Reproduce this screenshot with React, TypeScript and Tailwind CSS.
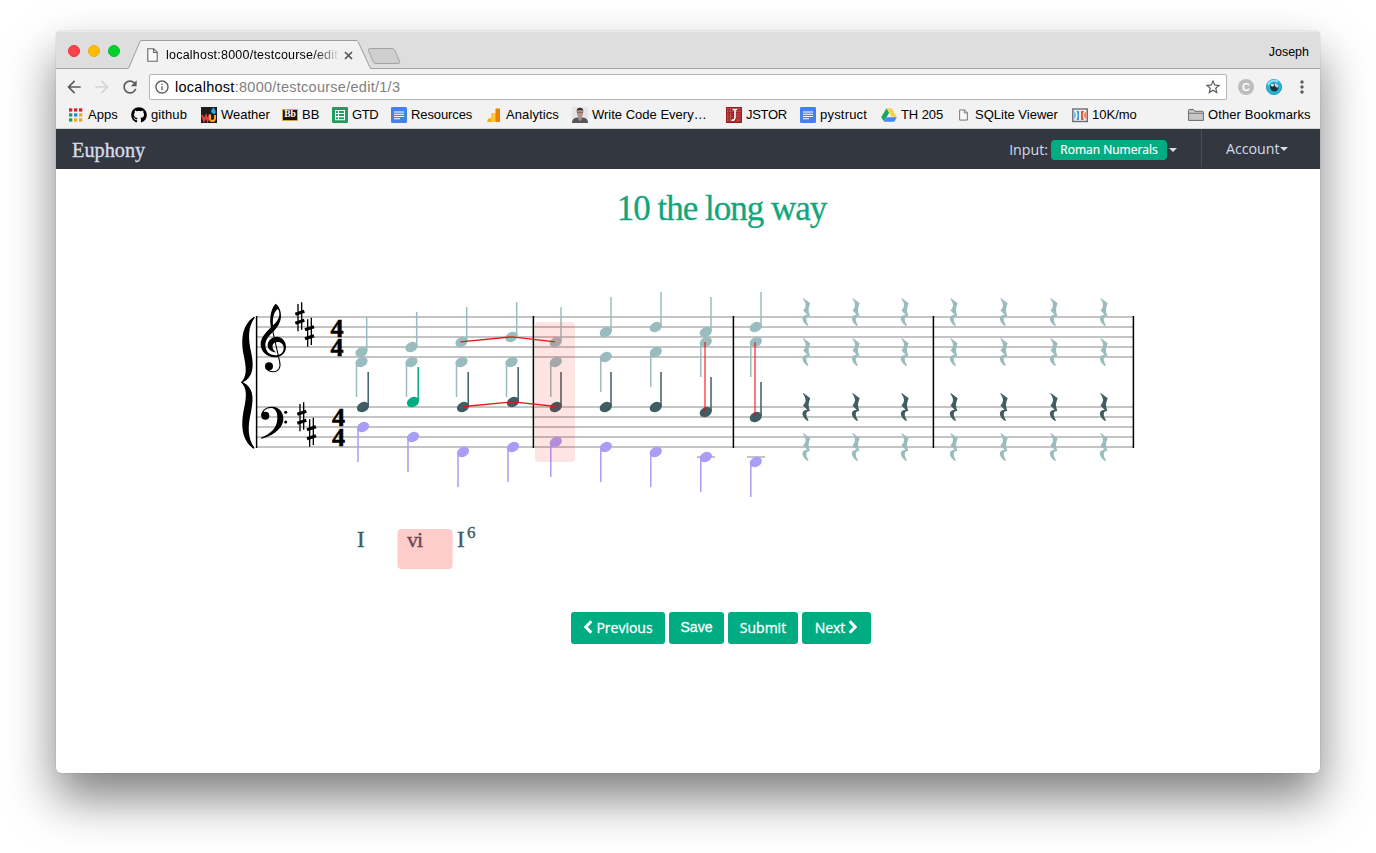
import React from "react";
import { FaGithub } from "react-icons/fa";
import { MdArrowBack, MdArrowForward, MdRefresh, MdMoreVert, MdStarBorder, MdInfoOutline } from "react-icons/md";

type Point = [number, number];

const SOPRANO: Point[] = [[361.5, 352], [411.5, 347], [461.5, 342], [511.5, 337], [555.8, 342], [605.8, 332], [655.8, 327], [705.8, 332], [755.8, 327]];
const ALTO: Point[] = [[361.5, 362], [411.5, 362], [461.5, 362], [511.5, 362], [555.8, 362], [605.8, 357], [655.8, 352], [705.8, 342], [755.8, 342]];
const TENOR: Point[] = [[363, 407], [413, 402], [463, 407], [513, 402], [555.8, 407], [605.8, 407], [655.8, 407], [705.8, 412], [755.8, 417]];
const BASS: Point[] = [[363, 427], [413, 437], [463, 452], [513, 447], [555.8, 442], [605.8, 447], [655.8, 452], [705.8, 457], [755.8, 462]];
const RESTS = [802.3, 851.7, 900.7, 949.7, 999.7, 1049.7, 1099.7];

function Note({ at, up, color }: { at: Point; up?: boolean; color: string }) {
  const [x, y] = at;
  const sx = up ? x + 5.2 : x - 5;
  return (
    <g fill={color} stroke={color}>
      <ellipse cx={x} cy={y} rx="6.4" ry="4.8" stroke="none" transform={`rotate(-27 ${x} ${y})`} />
      <line x1={sx} x2={sx} y1={up ? y - 1 : y + 1} y2={up ? y - 35 : y + 35} strokeWidth="1.5" />
    </g>
  );
}

function Rest({ x, y, color }: { x: number; y: number; color: string }) {
  return (
    <path
      transform={`translate(${x} ${y}) scale(.3333)`}
      fill={color}
      d="M3 0L24 16C18 30 17 40 23 54C10 53 9 66 19 82L16 84C5 77 -3 64 2 56C5 51 11 50 15 51L2 37C13 27 12 16 2 2Z"
    />
  );
}

function Sharp({ x, y }: { x: number; y: number }) {
  return (
    <g transform={`translate(${x} ${y})`} stroke="#000">
      <path d="M8 5V87M19 0V82" strokeWidth="4" />
      <path d="M0 36L27 27M0 63L27 54" strokeWidth="9.5" />
    </g>
  );
}

function Score() {
  return (
    <svg className="block" width="912" height="300" viewBox="232 285 912 300">
      {[317, 327, 337, 347, 357, 407, 417, 427, 437, 447].map((y) => (
        <line key={y} x1="256" x2="1134" y1={y} y2={y} stroke="#b0b0b0" strokeWidth="1.6" />
      ))}
      {[256.6, 533.4, 733.4, 933.4, 1133.4].map((x) => (
        <line key={x} x1={x} x2={x} y1="316" y2="448" stroke="#000" strokeWidth="1.5" />
      ))}
      <g transform="translate(230 285) scale(.33333)">
        <path d="M72 95C34 122 33 165 41 210C49 249 52 273 33 292C52 311 50 335 41 376C33 420 34 464 70 491L74 489C52 458 53 425 63 380C73 334 68 307 39 292C68 277 73 249 64 205C54 160 53 127 75 97Z" />
        <path
          fillRule="evenodd"
          d="M137 56C147 63 153 76 153 92C153 113 140 130 128 142C114 155 106 167 106 181C107 201 119 211 136 211C151 211 161 203 161 189C161 178 153 171 143 171C130 171 125 181 129 191C131 197 135 200 139 202C125 202 113 194 113 181C113 166 126 155 141 155C157 156 168 169 168 186C168 205 153 217 133 217C110 216 92 200 92 178C92 158 107 143 123 127C121 118 120 108 121 98C122 80 128 65 137 56ZM143 72C134 78 127 94 129 121C139 112 148 101 148 87C148 79 146 74 143 72Z"
        />
        <path d="M125 124L149 230C153 248 145 260 130 260C121 260 112 256 108 249" fill="none" stroke="#000" strokeWidth="3.2" />
        <circle cx="117" cy="244" r="12" />
        <path d="M94 396C91 377 107 364 127 365C147 366 160 381 160 401C160 430 128 453 94 461L93 458C121 447 141 430 142 402C143 383 137 370 124 369C110 368 100 377 98 388Z" />
        <circle cx="106" cy="392" r="12" />
        <circle cx="167" cy="382" r="4.5" />
        <circle cx="167" cy="411" r="4.5" />
        <Sharp x={196} y={52} />
        <Sharp x={225} y={98} />
        <Sharp x={202} y={352} />
        <Sharp x={231} y={398} />
      </g>
      <g className="font-['Liberation_Serif',serif] font-bold" fontSize="26" stroke="#000" strokeWidth=".6">
        <text x="330.6" y="336.8">4</text>
        <text x="330.6" y="356.4">4</text>
        <text x="332" y="426.4">4</text>
        <text x="332" y="446.4">4</text>
      </g>
      {RESTS.map((x) => (
        <g key={x}>
          <Rest x={x} y={298} color="#9bbcbe" />
          <Rest x={x} y={338} color="#9bbcbe" />
          <Rest x={x} y={393} color="#405e62" />
          <Rest x={x} y={433} color="#9bbcbe" />
        </g>
      ))}
      <path d="M697 457H715M747 457H765" stroke="#b0b0b0" strokeWidth="1.6" />
      {SOPRANO.map((p, i) => <Note key={i} at={p} up color="#9bbcbe" />)}
      {ALTO.map((p, i) => <Note key={i} at={p} color="#9bbcbe" />)}
      {TENOR.map((p, i) => <Note key={i} at={p} up color={i === 1 ? "#00ad83" : "#3f5d62"} />)}
      {BASS.map((p, i) => <Note key={i} at={p} color="#a99ef7" />)}
      <rect x="535" y="322" width="40" height="140" rx="4" fill="#ff0000" fillOpacity=".105" />
      <path d="M460.5 341.8L512 336.8L555 341.8M464 406.5L513 401.8L556 406.5" fill="none" stroke="#e01818" strokeWidth="1.3" />
      <path d="M705 342V412M755 342V416" stroke="#ff0000" strokeOpacity=".52" strokeWidth="2" />
      <g className="font-['Liberation_Serif',serif]" fill="#3f5d62" stroke="#3f5d62" strokeWidth=".4">
        <text x="357" y="547" fontSize="23">I</text>
        <text x="407" y="547" fontSize="22" textLength="16">vi</text>
        <text x="457" y="547" fontSize="23">I</text>
        <text x="467" y="538" fontSize="17">6</text>
      </g>
      <rect x="397.6" y="529" width="55" height="40" rx="4" fill="#ff0000" fillOpacity=".2" />
    </svg>
  );
}

const PageIcon = ({ className }: { className?: string }) => (
  <svg className={className} viewBox="0 0 11 14" fill="#fafafa" stroke="#666" strokeWidth="1.1">
    <path d="M.8.8H6.8L10.2 4.2V13.2H.8ZM6.5.8V4.5H10.2" />
  </svg>
);

const Svg16 = ({ children }: { children: React.ReactNode }) => (
  <svg width="16" height="16" viewBox="0 0 16 16">{children}</svg>
);

const DocIcon = () => (
  <Svg16>
    <rect width="16" height="16" rx="1.2" fill="#4382ee" />
    <path d="M3 5H13M3 7.3H13M3 9.5H13M3 11.7H9" stroke="#fff" strokeWidth="1.1" />
  </Svg16>
);

const DOTS = ["#d8232a", "#d8232a", "#d8232a", "#1f9d58", "#3b7de0", "#f0a81c", "#1f9d58", "#f0a81c", "#f0a81c"];

function AppsIcon() {
  return (
    <Svg16>
      {DOTS.map((c, i) => (
        <rect key={i} x={1 + (i % 3) * 5} y={1.3 + Math.floor(i / 3) * 5} width="3.3" height="3.3" fill={c} />
      ))}
    </Svg16>
  );
}

const WeatherIcon = () => (
  <Svg16>
    <rect width="16" height="16" fill="#1d1d1f" />
    <path d="M1 8L3 13.5L5 9L6.5 13.5L9 7.5" fill="none" stroke="#e8403a" strokeWidth="2" />
    <path d="M9 7.5V11.5Q9 14 11.3 14T14 11.5V8" fill="none" stroke="#f5a623" strokeWidth="2" />
    <path d="M12.5.5Q15.5 4 14.5 6T11 6T12.5.5" fill="#2ba8e0" />
  </Svg16>
);

const BbIcon = () => (
  <span className="flex h-[12px] w-4 items-center justify-center border border-[#d9a441] bg-[#1a1712] font-['Liberation_Serif',serif] text-[9.5px] leading-none font-bold text-white">
    Bb
  </span>
);

const SheetIcon = () => (
  <Svg16>
    <rect width="16" height="16" rx="1.2" fill="#1f9d5c" />
    <path d="M3.5 3.5H12.5V12.7H3.5ZM3.5 6.5H12.5M3.5 9.6H12.5M6.5 3.5V12.7" fill="none" stroke="#fff" strokeWidth="1.1" />
  </Svg16>
);

const AnalyticsIcon = () => (
  <Svg16>
    <path d="M1.5 15Q.8 13 2.5 11.5L6 11V15Z" fill="#f9ab00" />
    <rect x="5" y="6" width="5" height="9" rx=".6" fill="#ffc73a" />
    <rect x="9.5" y="1.5" width="4.5" height="13.5" rx=".8" fill="#ee8100" />
  </Svg16>
);

const PortraitIcon = () => (
  <Svg16>
    <rect width="16" height="16" fill="#e6e4e8" />
    <path d="M0 16Q0 11 5 10.5H11Q16 11 16 16Z" fill="#55575c" />
    <path d="M6 9H10L9.5 13L8 14L6.5 13Z" fill="#a9908a" />
    <ellipse cx="8" cy="5.6" rx="3.2" ry="4.4" fill="#b8958a" />
    <path d="M4.6 5Q4.4.7 8 .8T11.4 5L10.6 3.3H5.4Z" fill="#3b3230" />
    <path d="M5 5.4H11" stroke="#6b5a58" strokeWidth=".8" />
  </Svg16>
);

const JstorIcon = () => (
  <Svg16>
    <rect width="16" height="16" fill="#9d1b1f" />
    <path d="M1 2H15M1 4.5H15M1 7H15M1 9.5H15M1 12H15M1 14H15M2 1V15M4.5 1V15M11.8 1V15M14 1V15" stroke="#d08a88" strokeWidth=".7" strokeDasharray="1.2 1.1" />
    <path d="M6.5 2.5H11M9 2.5V10Q9 13.5 5.5 13.2" fill="none" stroke="#fff" strokeWidth="1.6" />
  </Svg16>
);

const DriveIcon = () => (
  <Svg16>
    <path d="M5.5 1.3L8.2 5.8L3 14.6L.2 10.3Z" fill="#1fa463" />
    <path d="M5.5 1.3H10.6L15.9 10.3H10.8Z" fill="#ffd04b" />
    <path d="M5.5 10.3H15.9L13.3 14.8H2.9Z" fill="#4688f4" />
  </Svg16>
);

const MoneyIcon = () => (
  <Svg16>
    <rect x=".8" y="2" width="14.5" height="12.5" fill="#eee" stroke="#6b6f78" strokeWidth="1.4" />
    <path d="M1.5 4.5Q4 5 4 8.3T1.5 12Z" fill="#7fc4e4" />
    <path d="M4.5 4Q6.5 8.3 4.5 13H7V4Z" fill="#3c9fd4" />
    <path d="M14.7 4.5Q12 5 12 8.3T14.7 12Z" fill="#e98a72" />
    <path d="M12 4Q9.5 8.3 12 13H9V4Z" fill="#e05638" />
  </Svg16>
);

const FolderIcon = () => (
  <Svg16>
    <path d="M.6 13.4V3.2Q.6 2.5 1.3 2.5H5.5L7 4.3H14.4Q15.4 4.3 15.4 5.2V13.4Z" fill="#c8c8c8" stroke="#686868" />
    <path d="M.6 6.3H15.4" stroke="#777" />
  </Svg16>
);

function Bookmark({ icon, label, className }: { icon: React.ReactNode; label: string; className: string }) {
  return (
    <div className={`flex shrink-0 items-center gap-1 ${className}`}>
      <span className="flex w-4 shrink-0 items-center justify-center">{icon}</span>
      <span className="whitespace-nowrap">{label}</span>
    </div>
  );
}

function TabStrip() {
  return (
    <div className="flex h-[38px] shrink-0 items-center bg-[#dedede] shadow-[inset_0_-1px_0_#a5a5a5,inset_0_1px_0_#ececec]">
      <div className="mt-[2px] ml-3 flex gap-2">
        <span className="size-3 rounded-full border border-[#e9343d] bg-[#fc4349]" />
        <span className="size-3 rounded-full border border-[#f2b000] bg-[#fdbc0a]" />
        <span className="size-3 rounded-full border border-[#06bf27] bg-[#05d02c]" />
      </div>
      <div className="relative ml-2 flex h-[38px] w-[243px] items-center pt-[10px] pl-[19px]">
        <svg className="absolute inset-0" width="243" height="38">
          <path d="M0 38L12 10.5Q12.7 9.5 14 9.5H228Q229.5 9.5 230 10.5L242.5 38Z" fill="#f2f2f2" />
          <path d="M.5 37.5L12 10.5Q12.7 9.5 14 9.5H228Q229.5 9.5 230 10.5L242.5 37.5" fill="none" stroke="#9c9c9c" />
        </svg>
        <PageIcon className="relative h-[14px] w-[11px]" />
        <span className="relative ml-2 w-[174px] overflow-hidden bg-gradient-to-r from-black from-82% to-[#f2f2f2] bg-clip-text text-[12.5px] tracking-[.22px] whitespace-nowrap text-transparent">
          localhost:8000/testcourse/edit
        </span>
        <svg className="relative ml-1" width="9" height="9" stroke="#555" strokeWidth="1.7">
          <path d="M1 1L8 8M8 1L1 8" />
        </svg>
      </div>
      <svg className="mt-[11px] -ml-[4px]" width="35" height="18">
        <path d="M3 1.5H25Q27 1.5 28 3.5L32.7 14.5Q33.2 16.5 31 16.5H9Q7 16.5 6 14.5L1.5 3.5Q.8 1.5 3 1.5Z" fill="#cfcfcf" stroke="#a4a4a4" />
      </svg>
      <span className="mt-1 mr-[11px] ml-auto text-[12.5px]">Joseph</span>
    </div>
  );
}

function Toolbar() {
  return (
    <div className="flex h-[36px] shrink-0 items-center bg-[#f2f2f2] text-[#5c5c5c]">
      <MdArrowBack className="ml-2 size-5" />
      <MdArrowForward className="ml-2 size-5 text-[#d5d5d5]" />
      <MdRefresh className="ml-2 size-5" />
      <div className="ml-[9px] flex h-[26px] w-[1078px] items-center rounded-[2px] border border-[#b4b4b4] bg-white">
        <MdInfoOutline className="ml-1 size-4" />
        <span className="mt-[2px] ml-[5px] text-[14.5px] tracking-[.27px] text-[#808080]">
          <span className="text-black">localhost</span>:8000/testcourse/edit/1/3
        </span>
        <MdStarBorder className="mr-[4px] ml-auto size-[18px]" />
      </div>
      <span className="ml-[11px] flex size-4 items-center justify-center rounded-full bg-[#bdbdbd] text-[11px] leading-none font-bold text-white">C</span>
      <svg className="ml-3" width="16" height="16">
        <circle cx="8" cy="8" r="7.6" fill="#22b7dc" stroke="#1489ad" strokeWidth=".8" />
        <path d="M2 6A6.5 6.5 0 0 1 12 2.8" stroke="#8ee5f6" strokeWidth="2" fill="none" />
        <circle cx="8.3" cy="8.2" r="4.2" fill="#263238" />
        <path d="M8.3 4A4.2 4.2 0 0 1 12.5 8.2Q9 9.5 8.3 4Z" fill="#c5dde2" />
        <circle cx="6.5" cy="6" r="1.6" fill="#c5eef6" />
      </svg>
      <MdMoreVert className="ml-[10px] size-5" />
    </div>
  );
}

function BookmarkBar() {
  return (
    <div className="flex h-[24px] shrink-0 items-center bg-[#f2f2f2] pb-1 pl-3 text-[13px] shadow-[inset_0_-1px_0_#cdd2d0]">
      <Bookmark className="w-[63px]" icon={<AppsIcon />} label="Apps" />
      <Bookmark className="w-[70px] tracking-[.1px]" icon={<FaGithub size={16} />} label="github" />
      <Bookmark className="w-[81px]" icon={<WeatherIcon />} label="Weather" />
      <Bookmark className="w-[50px]" icon={<BbIcon />} label="BB" />
      <Bookmark className="w-[59px] tracking-[-.4px]" icon={<SheetIcon />} label="GTD" />
      <Bookmark className="w-[95px] tracking-[-.1px]" icon={<DocIcon />} label="Resources" />
      <Bookmark className="w-[86px] tracking-[.1px]" icon={<AnalyticsIcon />} label="Analytics" />
      <Bookmark className="w-[154px]" icon={<PortraitIcon />} label="Write Code Every…" />
      <Bookmark className="w-[74px] tracking-[-.3px]" icon={<JstorIcon />} label="JSTOR" />
      <Bookmark className="w-[81px] tracking-[.2px]" icon={<DocIcon />} label="pystruct" />
      <Bookmark className="w-[74px] tracking-[-.1px]" icon={<DriveIcon />} label="TH 205" />
      <Bookmark className="w-[117px]" icon={<PageIcon className="h-[12px] w-[9px]" />} label="SQLite Viewer" />
      <Bookmark className="w-[116px]" icon={<MoneyIcon />} label="10K/mo" />
      <Bookmark className="w-[130px] tracking-[.1px]" icon={<FolderIcon />} label="Other Bookmarks" />
    </div>
  );
}

const Caret = () => <span className="border-x-4 border-t-4 border-x-transparent border-t-[#dadeea]" />;

function Navbar() {
  return (
    <nav className="flex h-[40px] shrink-0 items-center bg-[#333840] pt-[2px] font-['Open_Sans',sans-serif] text-[14.2px] text-[#d6dbea]">
      <span className="ml-4 font-['Liberation_Serif',serif] text-[20.3px] [-webkit-text-stroke:.35px_#d6dbea]">Euphony</span>
      <span className="ml-auto pb-[1px]">Input:</span>
      <span className="ml-[3px] flex h-[20px] w-[116px] items-center justify-center rounded-[4px] bg-[#00ad83] text-[12px] text-white [-webkit-text-stroke:.2px_white]">
        Roman Numerals
      </span>
      <span className="ml-[2px] flex"><Caret /></span>
      <div className="-mt-[2px] ml-6 flex h-full w-[119px] items-center self-stretch border-l border-[#4b5058] pl-6">
        <span className="pt-px">Account</span>
        <span className="mt-[2px] flex"><Caret /></span>
      </div>
    </nav>
  );
}

const BUTTON = "flex h-8 items-center justify-center rounded-[3px] bg-[#00ad83] pb-[2px] text-[14px] text-white [-webkit-text-stroke:.3px_white]";

const Chevron = ({ d }: { d: string }) => (
  <svg width="10" height="14" viewBox="0 0 10 14" fill="none" stroke="#fff" strokeWidth="3">
    <path d={d} />
  </svg>
);

function Actions() {
  return (
    <div className="mt-[27px] ml-[515px] flex gap-1 font-['Open_Sans',sans-serif]">
      <button className={`${BUTTON} w-[94px] gap-[3px]`}><Chevron d="M8.3 1.3L2.8 7L8.3 12.7" />Previous</button>
      <button className={`${BUTTON} w-[55px] pb-0 font-['Liberation_Sans',sans-serif]`}>Save</button>
      <button className={`${BUTTON} w-[70px]`}>Submit</button>
      <button className={`${BUTTON} w-[69px] gap-[3px]`}>Next<Chevron d="M1.7 1.3L7.2 7L1.7 12.7" /></button>
    </div>
  );
}

export default function App() {
  return (
    <div className="h-[853px] w-[1376px] overflow-hidden bg-white pt-[31px] pl-[56px] font-['Liberation_Sans',sans-serif] text-black">
      <div className="flex h-[742px] w-[1264px] flex-col overflow-hidden rounded-[5px] bg-white shadow-[0_0_1px_rgba(0,0,0,.45),0_25px_48px_rgba(0,0,0,.5)]">
        <TabStrip />
        <Toolbar />
        <BookmarkBar />
        <Navbar />
        <main className="flex flex-col">
          <h1 className="mt-[20px] h-10 pl-[67px] text-center font-['Liberation_Serif',serif] text-[35px] leading-10 tracking-[-1px] text-[#12a67d] [-webkit-text-stroke:.3px_#12a67d]">
            10 the long way
          </h1>
          <div className="mt-[56px] ml-[176px]">
            <Score />
          </div>
          <Actions />
        </main>
      </div>
    </div>
  );
}
